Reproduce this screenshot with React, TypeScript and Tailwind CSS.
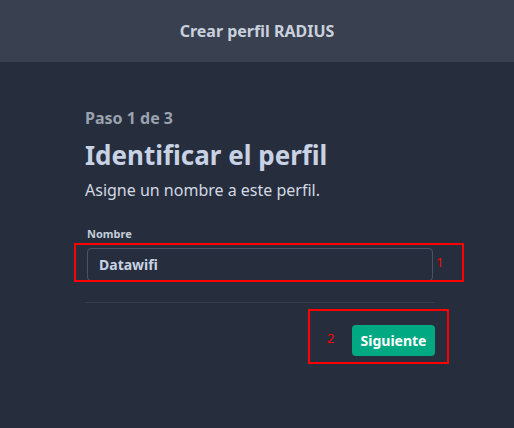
export default function App() {
  return (
    <div
      className="flex h-[428px] w-[514px] flex-col bg-[#262e3e]"
      style={{ fontFamily: '"Noto Sans", "Open Sans", sans-serif' }}
    >
      <header className="flex h-[62px] shrink-0 items-center justify-center bg-[#394050]">
        <h1 className="text-[16px] font-bold text-[#c9d1dd]">Crear perfil RADIUS</h1>
      </header>

      <main className="flex flex-col pl-[85px] pt-[46px]">
        <div className="w-[350px]">
          <p className="text-[16px] font-bold leading-[20px] text-[#9aa2ae]">Paso 1 de 3</p>
          <h2 className="mt-[9px] text-[26px] font-bold leading-[36px] text-[#c8d2e4]">
            Identificar el perfil
          </h2>
          <p className="mt-[6px] text-[16px] leading-[22px] text-[#d2d8e2]">
            Asigne un nombre a este perfil.
          </p>

          <div className="relative mt-[26px] pl-[2px]">
            <label className="block text-[11px] font-bold leading-[14px] text-[#c4ccd8]">Nombre</label>
            <div className="mt-[7px] flex h-[33px] w-[346px] items-center rounded-[4px] border border-[#4b5366] px-[11px]">
              <span className="text-[14px] font-bold text-[#c8d2e4]">Datawifi</span>
            </div>
            <div className="pointer-events-none absolute left-[-11px] top-[16px] h-[39px] w-[390px] border-[2px] border-[#ff0000]" />
            <span className="absolute left-[351px] top-[26px] text-[13px] text-[#ff0000]">1</span>
          </div>

          <div className="mt-[21px] h-px w-[350px] bg-[#363e4e]" />

          <div className="relative mt-[22px] flex justify-end">
            <button className="h-[31px] w-[83px] rounded-[4px] bg-[#01a982] text-[14px] font-bold text-white">
              Siguiente
            </button>
            <div className="pointer-events-none absolute left-[223px] top-[-16px] h-[55px] w-[141px] border-[2px] border-[#ff0000]" />
            <span className="absolute left-[242px] top-[4px] text-[13px] text-[#ff0000]">2</span>
          </div>
        </div>
      </main>
    </div>
  );
}
